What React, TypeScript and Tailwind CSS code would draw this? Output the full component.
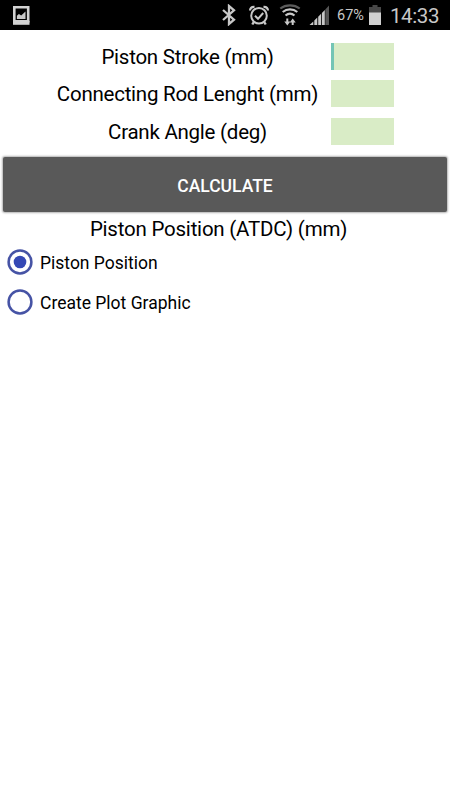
import { useState } from "react";

const FIELDS = [
  { id: "stroke", label: "Piston Stroke (mm)" },
  { id: "rod", label: "Connecting Rod Lenght (mm)" },
  { id: "angle", label: "Crank Angle (deg)" },
];

const MODES = ["Piston Position", "Create Plot Graphic"];

function StatusBar() {
  return (
    <header className="flex h-[30px] w-full items-center bg-black pl-3 text-[#c8c8c8]">
      <svg width="18" height="20" viewBox="0 0 18 20" fill="none">
        <path d="M2.300 2.300h13.900v14H2.300z" stroke="#d2d2d2" strokeWidth="2.6" />
        <path d="M1 16h16.500v3.800H1z" fill="#d2d2d2" />
        <path d="M4.900 14V10.800l2-1.700 2.300 1.400 4.300-4V14z" fill="#c8c8c8" />
      </svg>

      <svg className="ml-[191px]" width="16" height="22" viewBox="0 0 16 22" fill="none">
        <path d="M2 6l11 9.700L8 20V2l5 4.300L2 16" stroke="#c8c8c8" strokeWidth="2.3" />
      </svg>

      <svg className="ml-[11px]" width="22" height="22" viewBox="0 0 22 22" fill="none" stroke="#c8c8c8">
        <circle cx="11" cy="11.800" r="7.800" strokeWidth="2" />
        <path d="M7 11.800l3 3 5.200-5.800" strokeWidth="2" />
        <path d="M2 6.500C2.200 4 4 2.600 6.500 2.800M20 6.500c-.2-2.500-2-3.900-4.500-3.700" strokeWidth="2.2" />
        <path d="M5.800 18L4.300 20.500M16.200 18l1.500 2.500" strokeWidth="2.4" />
      </svg>

      <svg className="ml-[9px]" width="22" height="22" viewBox="0 0 22 22" fill="none">
        <path d="M1.300 4.500c5.500-4.200 13.900-4.200 19.400 0" stroke="#5c5c5c" strokeWidth="2.2" />
        <path d="M3.700 8c4.200-3.400 10.400-3.400 14.600 0M6.500 11.500c2.700-2.200 6.300-2.200 9 0" stroke="#c8c8c8" strokeWidth="2.2" />
        <path d="M8.300 14.500v4M13.700 21v-4" stroke="#c8c8c8" strokeWidth="2" />
        <path d="M5.300 17.500h6L8.300 21.500zM10.700 18.500h6L13.700 14.500z" fill="#c8c8c8" />
      </svg>

      <svg className="ml-[8px]" width="21" height="20" viewBox="0 0 21 20">
        <path d="M0.500 20L4.300 16.500V20z" fill="#c8c8c8" />
        <path d="M5.300 15.500l3-3V20h-3zM9.200 11.700l2.900-3V20H9.200zM12.900 8l2.900-3V20h-2.900z" fill="#c8c8c8" />
        <path d="M16.300 4.500L20 0.500V20h-3.700z" fill="#555" />
      </svg>

      <span className="ml-[7px] w-7 pt-[2px] text-[14.500px] leading-5 whitespace-nowrap">67%</span>

      <svg className="ml-[4px]" width="12" height="20" viewBox="0 0 12 20">
        <path d="M3.500 0h5v2H12v6H0V2h3.500z" fill="#484848" />
        <path d="M0 7.500h12V20H0z" fill="#d0d0d0" />
      </svg>

      <time className="ml-[9px] pt-[1px] text-[20.500px] leading-6 tracking-[-0.4px] whitespace-nowrap">14:33</time>
    </header>
  );
}

export default function App() {
  const [mode, setMode] = useState(MODES[0]);

  return (
    <div className="flex h-screen w-full flex-col overflow-hidden bg-white font-['Roboto',sans-serif] text-black">
      <StatusBar />

      <main className="flex flex-col">
        <div className="mt-[12.500px] flex flex-col gap-[10.500px]">
          {FIELDS.map((field, i) => (
            <div key={field.id} className="flex h-[27px] items-center gap-[13px] pl-[57px]">
              <label htmlFor={field.id} className="flex w-[261px] justify-center pt-[2px] text-[20.500px] tracking-[-0.25px] whitespace-nowrap">
                {field.label}
              </label>
              <div className="flex h-[27px] w-[63px] bg-[#d9ecc6]">
                {i === 0 && <span className="w-[3px] shrink-0 bg-[#74c5b5]" />}
                <input id={field.id} className="w-full min-w-0 bg-transparent outline-none" />
              </div>
            </div>
          ))}
        </div>

        <button className="mx-[3px] mt-[12.500px] h-[55px] rounded-[2px] bg-[#595959] pt-[3px] text-[17.500px] font-medium text-white shadow-[0_0_2px_1px_rgba(0,0,0,0.3)]">
          CALCULATE
        </button>

        <p className="mt-[3px] pr-[13px] text-center text-[20.500px] leading-7 tracking-[-0.22px]">Piston Position (ATDC) (mm)</p>

        <div className="mt-[6px] flex flex-col gap-[14px] pl-[7px]">
          {MODES.map((name) => (
            <label key={name} className="flex h-[26px] items-center gap-[7px] text-[17.500px] whitespace-nowrap">
              <input
                type="radio"
                name="mode"
                className="sr-only"
                checked={mode === name}
                onChange={() => setMode(name)}
              />
              <svg width="26" height="26" viewBox="0 0 26 26" fill="none">
                <circle cx="13" cy="13" r="11.400" stroke="#4653a5" strokeWidth="2.5" />
                {mode === name && <circle cx="13" cy="13" r="6.300" fill="#3548b5" />}
              </svg>
              <span className="pt-[2px]">{name}</span>
            </label>
          ))}
        </div>
      </main>
    </div>
  );
}
